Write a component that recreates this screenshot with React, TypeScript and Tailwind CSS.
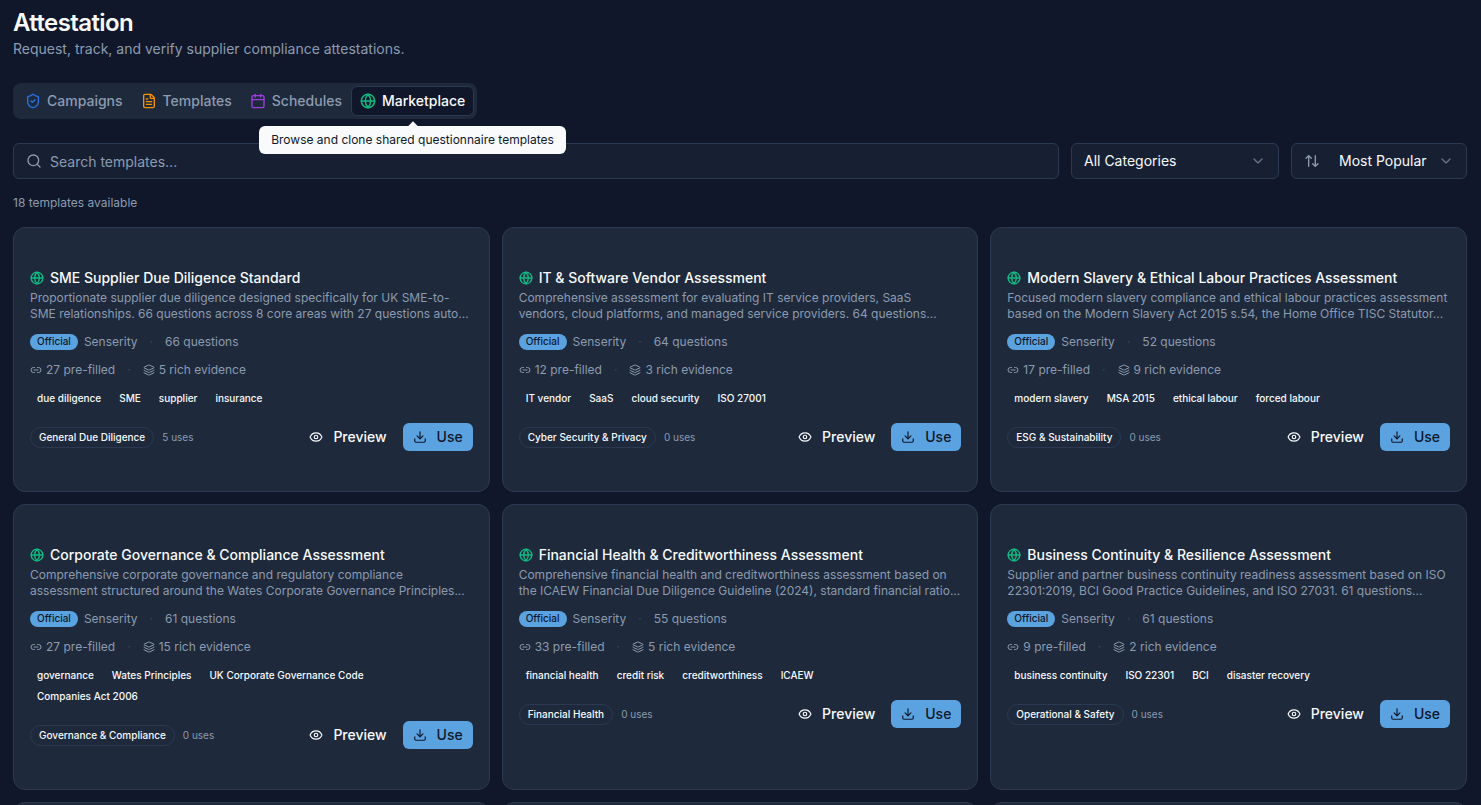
import { ShieldCheck, FileText, Calendar, Globe, Search, ChevronDown, ArrowUpDown, Link2, Layers, Eye, Download } from "lucide-react";

type Card = { title: string; d1: string; d2: string; q: number; pre: number; rich: number; tags: string[]; cat: string; uses: number };

const cards: Card[] = [
  { title: "SME Supplier Due Diligence Standard", d1: "Proportionate supplier due diligence designed specifically for UK SME-to-", d2: "SME relationships. 66 questions across 8 core areas with 27 questions auto...", q: 66, pre: 27, rich: 5, tags: ["due diligence", "SME", "supplier", "insurance"], cat: "General Due Diligence", uses: 5 },
  { title: "IT & Software Vendor Assessment", d1: "Comprehensive assessment for evaluating IT service providers, SaaS", d2: "vendors, cloud platforms, and managed service providers. 64 questions...", q: 64, pre: 12, rich: 3, tags: ["IT vendor", "SaaS", "cloud security", "ISO 27001"], cat: "Cyber Security & Privacy", uses: 0 },
  { title: "Modern Slavery & Ethical Labour Practices Assessment", d1: "Focused modern slavery compliance and ethical labour practices assessment", d2: "based on the Modern Slavery Act 2015 s.54, the Home Office TISC Statutor...", q: 52, pre: 17, rich: 9, tags: ["modern slavery", "MSA 2015", "ethical labour", "forced labour"], cat: "ESG & Sustainability", uses: 0 },
  { title: "Corporate Governance & Compliance Assessment", d1: "Comprehensive corporate governance and regulatory compliance", d2: "assessment structured around the Wates Corporate Governance Principles...", q: 61, pre: 27, rich: 15, tags: ["governance", "Wates Principles", "UK Corporate Governance Code", "Companies Act 2006"], cat: "Governance & Compliance", uses: 0 },
  { title: "Financial Health & Creditworthiness Assessment", d1: "Comprehensive financial health and creditworthiness assessment based on", d2: "the ICAEW Financial Due Diligence Guideline (2024), standard financial ratio...", q: 55, pre: 33, rich: 5, tags: ["financial health", "credit risk", "creditworthiness", "ICAEW"], cat: "Financial Health", uses: 0 },
  { title: "Business Continuity & Resilience Assessment", d1: "Supplier and partner business continuity readiness assessment based on ISO", d2: "22301:2019, BCI Good Practice Guidelines, and ISO 27031. 61 questions...", q: 61, pre: 9, rich: 2, tags: ["business continuity", "ISO 22301", "BCI", "disaster recovery"], cat: "Operational & Safety", uses: 0 },
];

function TemplateCard({ c }: { c: Card }) {
  return (
    <div className="rounded-xl border border-[#2b3a52] bg-[#1e293b] px-4 pt-[40px] pb-[40px]">
      <div className="flex h-[20px] items-center gap-[6px]">
        <Globe strokeWidth={2.4} className="h-[14px] w-[14px] text-[#10b981]" />
        <span className="text-sm font-medium text-[#f8fafc]">{c.title}</span>
      </div>
      <p className="mt-[2px] whitespace-nowrap text-xs leading-4 text-[#8c9bb0]">{c.d1}</p>
      <p className="whitespace-nowrap text-xs leading-4 text-[#8c9bb0]">{c.d2}</p>
      <div className="mt-[12px] flex h-[16px] items-center text-xs text-[#8c9bb0]">
        <span className="flex h-[16px] items-center rounded-full bg-[#5ba3e0] px-[7px] text-[10px] font-medium text-[#0f172a]">Official</span>
        <span className="ml-[6px]">Senserity</span>
        <span className="mx-[12px] text-[#3a485e]">·</span>
        <span>{c.q} questions</span>
      </div>
      <div className="mt-[12px] flex h-[16px] items-center text-xs text-[#8c9bb0]">
        <Link2 className="h-3 w-3" />
        <span className="ml-[4px]">{c.pre} pre-filled</span>
        <span className="mx-[12px] text-[#3a485e]">·</span>
        <Layers className="h-3 w-3" />
        <span className="ml-[4px]">{c.rich} rich evidence</span>
      </div>
      <div className="mt-[12px] flex flex-wrap gap-x-[4px] gap-y-[4px]">
        {c.tags.map((t) => (
          <span key={t} className="flex h-[17px] items-center px-[7px] text-[10px] font-medium text-[#f8fafc]">{t}</span>
        ))}
      </div>
      <div className="mt-[16px] flex h-[28px] items-center">
        <span className="flex h-[21px] items-center rounded-full border border-[#2b3a52] px-[8px] text-[10px] font-medium text-[#f8fafc]">{c.cat}</span>
        <span className="ml-[8px] text-[10px] text-[#8c9bb0]">{c.uses} uses</span>
        <button className="ml-auto flex h-[28px] items-center gap-[10px] text-sm font-medium text-[#f8fafc]">
          <Eye className="h-[14px] w-[14px]" />
          Preview
        </button>
        <button className="ml-[16px] flex h-[28px] w-[70px] items-center justify-center gap-[10px] rounded-md bg-[#5ba3e0] text-sm font-medium text-[#0f172a]">
          <Download className="h-[14px] w-[14px]" />
          Use
        </button>
      </div>
    </div>
  );
}

export default function App() {
  return (
    <div className="h-screen overflow-hidden bg-[#10172a] pr-[14px] pl-[13px] font-['Inter',sans-serif]">
      <h1 className="pt-[7px] text-2xl leading-8 font-semibold tracking-tight text-[#f8fafc]">Attestation</h1>
      <p className="text-sm leading-5 text-[#8c9bb0]">Request, track, and verify supplier compliance attestations.</p>

      <div className="relative mt-[24px] flex h-[36px] w-[464px] items-center rounded-lg bg-[#1e293b] pl-[4px] text-sm font-medium text-[#8c9bb0]">
        <span className="flex h-[28px] items-center gap-[6px] px-[8px]"><ShieldCheck className="h-4 w-4 text-[#2673e8]" />Campaigns</span>
        <span className="ml-[2px] flex h-[28px] items-center gap-[6px] px-[8px]"><FileText className="h-4 w-4 text-[#f59208]" />Templates</span>
        <span className="flex h-[28px] items-center gap-[6px] pr-[1px] pl-[10px]"><Calendar className="h-4 w-4 text-[#9d3fe0]" />Schedules</span>
        <span className="ml-[8px] flex h-[30px] items-center gap-[6px] rounded-md border border-[#2b3a52] bg-[#10172a] px-[8px] text-[#f8fafc]"><Globe strokeWidth={2.25} className="h-4 w-4 text-[#10b981]" />Marketplace</span>
        <div className="absolute top-[43px] left-[246px] z-10 flex h-[28px] w-[307px] items-center justify-center rounded-md bg-[#f8fafc] text-xs font-normal text-[#0f172a]">
          <span className="absolute -top-[3px] left-[150px] h-[8px] w-[8px] rotate-45 bg-[#f8fafc]" />
          Browse and clone shared questionnaire templates
        </div>
      </div>

      <div className="mt-[24px] flex h-[36px] gap-[12px]">
        <div className="flex flex-1 items-center gap-[8px] rounded-md border border-[#2b3a52] bg-[#172033] pl-[12px] text-sm text-[#8c9bb0]">
          <Search className="h-4 w-4" />
          <span className="pt-[2px]">Search templates...</span>
        </div>
        <div className="flex w-[208px] items-center justify-between rounded-md border border-[#2b3a52] bg-[#172033] pr-[12px] pl-[12px] text-sm text-[#f8fafc]">
          All Categories
          <ChevronDown className="h-4 w-4 text-[#64748b]" />
        </div>
        <div className="flex w-[176px] items-center rounded-md border border-[#2b3a52] bg-[#172033] pr-[12px] pl-[12px] text-sm text-[#f8fafc]">
          <ArrowUpDown className="h-4 w-4 text-[#8c9bb0]" />
          <span className="ml-[19px]">Most Popular</span>
          <ChevronDown className="ml-auto h-4 w-4 text-[#64748b]" />
        </div>
      </div>

      <p className="mt-[16px] text-xs leading-4 text-[#8c9bb0]">18 templates available</p>

      <div className="mt-[16px] grid grid-cols-3 gap-[12px]">
        {cards.map((c) => (
          <TemplateCard key={c.title} c={c} />
        ))}
        {[0, 1, 2].map((i) => (
          <div key={i} className="h-[200px] rounded-xl border border-[#2b3a52] bg-[#1e293b]" />
        ))}
      </div>
    </div>
  );
}
